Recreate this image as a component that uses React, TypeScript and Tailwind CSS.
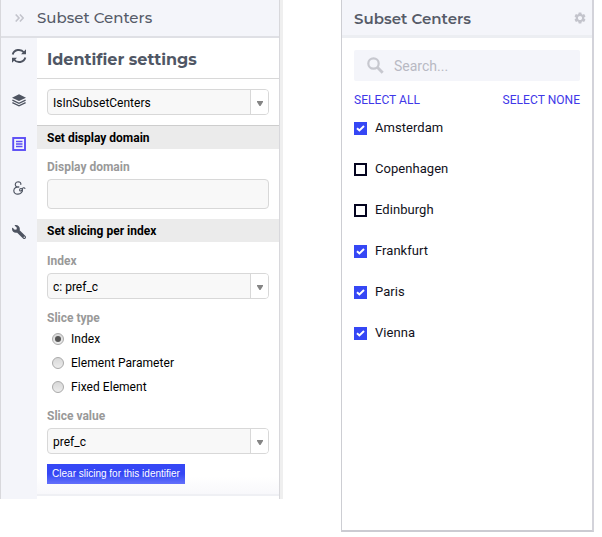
import React from 'react';
import { FaWrench } from 'react-icons/fa';
import { MdSettings } from 'react-icons/md';

function Select({ value }: { value: string }) {
  return (
    <div className="flex h-[26px] w-[222px] shrink-0 overflow-hidden rounded-[4px] border border-[#d8d8d8] bg-[#f8f8f8]">
      <span className="flex-1 pl-[5px] text-[12px] leading-[27px] text-black">{value}</span>
      <span className="flex w-[18px] justify-center border-l border-[#d8d8d8] bg-white pt-[11px]">
        <svg width="6" height="5" viewBox="0 0 6 5" className="block">
          <path d="M0 0H6V1L3.5 5H2.5L0 1Z" fill="#858585" />
        </svg>
      </span>
    </div>
  );
}

function Label({ children }: { children: React.ReactNode }) {
  return <div className="h-[16px] text-[12px] font-bold leading-[16px] text-[#999]">{children}</div>;
}

function SectionTitle({ children }: { children: React.ReactNode }) {
  return (
    <div className="h-[23px] shrink-0 bg-[#ebebeb] pl-[10px] text-[12px] font-bold leading-[25px] text-black">
      {children}
    </div>
  );
}

function RadioRow({ label, checked }: { label: string; checked?: boolean }) {
  return (
    <div className="flex h-6 items-center pl-[5px]">
      <span className="flex h-3 w-3 items-center justify-center rounded-full border border-[#a9a9a9] bg-linear-to-b from-[#d8d8d8] to-[#ececec]">
        {checked && <span className="h-[6px] w-[6px] rounded-full bg-[#555]" />}
      </span>
      <span className="ml-[7px] text-[12px] leading-4 tracking-[0.05px] text-black">{label}</span>
    </div>
  );
}

function CheckRow({ label, checked }: { label: string; checked: boolean }) {
  return (
    <div className="flex h-[41px] items-start">
      {checked ? (
        <svg width="13" height="13" viewBox="0 0 13 13" className="mt-[7px]">
          <rect width="13" height="13" fill="#3547f5" />
          <path d="M3 6.2L5.4 8.4L10 4" fill="none" stroke="white" strokeWidth="2" />
        </svg>
      ) : (
        <span className="mt-[7px] h-[13px] w-[13px] border-2 border-[#04041f]" />
      )}
      <span className="ml-2 mt-[5px] text-[13px] leading-4 tracking-[0.05px] text-[#111120]">{label}</span>
    </div>
  );
}

const cities = [
  { name: 'Amsterdam', checked: true },
  { name: 'Copenhagen', checked: false },
  { name: 'Edinburgh', checked: false },
  { name: 'Frankfurt', checked: true },
  { name: 'Paris', checked: true },
  { name: 'Vienna', checked: true },
];

export default function App() {
  return (
    <div className="flex h-[537px] w-[602px] items-start overflow-hidden bg-white font-['Roboto',sans-serif]">
      <section className="flex h-[499px] w-[283px] shrink-0 border-l border-[#d8d8dc]">
        <div className="flex w-[278px] flex-col">
          <header className="flex h-[38px] shrink-0 items-center border-b-2 border-[#dfe0e5] bg-[#f4f5fa]">
            <svg width="9" height="8" viewBox="0 0 9 8" className="ml-[14px]" fill="none" stroke="#c3c4cc" strokeWidth="1.6">
              <path d="M0.7 0.5L4 4L0.7 7.5M4.9 0.5L8.2 4L4.9 7.5" />
            </svg>
            <h1 className="ml-[13px] whitespace-nowrap font-['Montserrat','Inter',sans-serif] text-[15px] font-medium leading-5 text-[#565b68]">
              Subset Centers
            </h1>
          </header>
          <div className="flex min-h-0 flex-1">
            <nav className="flex w-[36px] shrink-0 flex-col items-center bg-[#f4f5fa] text-[#4e5461]">
              <svg width="16" height="16" viewBox="0 0 16 16" className="mt-[10px]" fill="none" stroke="currentColor" strokeWidth="1.9">
                <path d="M1.7 6.5C3 1.5 9.8 0.3 13 4.5M14.3 9.5C13 14.5 6.2 15.7 3 11.5" />
                <path d="M15 1.3V6.3H10ZM1 14.7V9.7H6Z" fill="currentColor" stroke="none" />
              </svg>
              <svg width="14" height="13" viewBox="0 0 14 13" className="mt-[30px]" fill="none" stroke="currentColor" strokeWidth="1.3">
                <path d="M7 0.3L14 3.7L7 7.1L0 3.7Z" fill="currentColor" stroke="none" />
                <path d="M0.4 6.1L7 9.3L13.6 6.1M0.4 8.7L7 11.9L13.6 8.7" />
              </svg>
              <svg width="14" height="14" viewBox="0 0 14 14" className="mt-[30px]" fill="none" stroke="#5b4df5">
                <rect x="1.2" y="1" width="11.8" height="12" strokeWidth="1.9" />
                <path d="M4 4.5H10.5M4 7H10.5M4 9.5H10.5" strokeWidth="1.3" />
              </svg>
              <svg width="13" height="14" viewBox="0 0 13 14" className="mt-[30px]" fill="none" stroke="currentColor" strokeWidth="1.15">
                <path d="M7.7 3.9C8.4 2.1 7 0.7 5.2 0.7C2.7 0.8 1.5 3.4 2.8 5.1C3.5 6 4.9 6.2 6.2 5.9C3.1 5.7 0.8 7.2 0.8 9.7C0.8 12 2.7 13.3 5 13.1C7.8 12.9 9.8 10.8 9.5 8.5C9.2 6.9 6.3 7.3 6.6 9.2C6.9 10.7 9.2 9.8 9.4 8C9.6 6.6 11.3 6.3 12.2 7.7" />
              </svg>
              <FaWrench size={14} className="mt-[30px] -scale-x-100" />
            </nav>
            <main className="flex min-w-0 flex-1 flex-col">
              <h2 className="h-[41px] shrink-0 whitespace-nowrap border-b border-[#d8d8d8] pl-[10px] font-['Montserrat','Inter',sans-serif] text-[16px] font-bold leading-[43px] text-[#505765]">
                Identifier settings
              </h2>
              <div className="h-[47px] shrink-0 border-b border-[#cdcdcd] pl-[10px] pt-[10px]">
                <Select value="IsInSubsetCenters" />
              </div>
              <SectionTitle>Set display domain</SectionTitle>
              <div className="h-[70px] shrink-0 pl-[10px] pt-[10px]">
                <Label>Display domain</Label>
                <div className="mt-1 h-[30px] w-[222px] rounded-[4px] border border-[#d8d8d8] bg-[#f8f8f8]" />
              </div>
              <SectionTitle>Set slicing per index</SectionTitle>
              <div className="flex h-[254px] shrink-0 flex-col items-start border-b-2 border-[#eff0f4] bg-linear-to-b from-white from-93% to-[#f8f8fb] pl-[10px] pt-[11px]">
                <Label>Index</Label>
                <div className="mt-1">
                  <Select value="c: pref_c" />
                </div>
                <div className="mt-[11px]">
                  <Label>Slice type</Label>
                </div>
                <div className="mt-px">
                  <RadioRow label="Index" checked />
                  <RadioRow label="Element Parameter" />
                  <RadioRow label="Fixed Element" />
                </div>
                <div className="mt-[9px]">
                  <Label>Slice value</Label>
                </div>
                <div className="mt-1">
                  <Select value="pref_c" />
                </div>
                <button className="mt-[10px] h-5 w-[138px] shrink-0 whitespace-nowrap bg-linear-to-b from-[#3547f5] from-50% to-[#6470fb] font-['Liberation_Sans',sans-serif] text-[10px] leading-5 text-white">
                  Clear slicing for this identifier
                </button>
              </div>
            </main>
          </div>
        </div>
        <div className="w-1 border-l border-[#d8d8dc] bg-[#efefef]" />
      </section>
      <section className="ml-[58px] flex h-[532px] w-[253px] shrink-0 flex-col border-b-2 border-l border-r-2 border-b-[#cbcbd2] border-l-[#cdced3] border-r-[#d3d3da] bg-white">
        <header className="flex h-[38px] shrink-0 items-center justify-between border-b-[3px] border-[#eceef2] bg-[#f4f5fa] pl-3 pr-[5px]">
          <h1 className="whitespace-nowrap pt-[3px] font-['Montserrat','Inter',sans-serif] text-[15px] font-semibold leading-5 text-[#565b68]">
            Subset Centers
          </h1>
          <MdSettings size={14} color="#c3c4cc" />
        </header>
        <div className="mx-3 mt-3 flex h-[31px] shrink-0 items-center rounded-[2px] bg-[#f4f5fa]">
          <svg width="17" height="17" viewBox="0 0 17 17" className="ml-[12.5px]" fill="none" stroke="#c7c8cf">
            <circle cx="6.5" cy="6.5" r="5.2" strokeWidth="2.2" />
            <path d="M10.3 10.3L15.7 15.7" strokeWidth="2.9" />
          </svg>
          <span className="ml-[10.5px] pt-px text-[14px] text-[#b8b9c3]">Search...</span>
        </div>
        <div className="mx-3 mt-[11px] flex h-4 shrink-0 justify-between text-[12px] leading-4 tracking-[0.04px] text-[#4038e8]">
          <span>SELECT ALL</span>
          <span>SELECT NONE</span>
        </div>
        <div className="mt-[7px] px-3">
          {cities.map((city) => (
            <CheckRow key={city.name} label={city.name} checked={city.checked} />
          ))}
        </div>
      </section>
    </div>
  );
}
